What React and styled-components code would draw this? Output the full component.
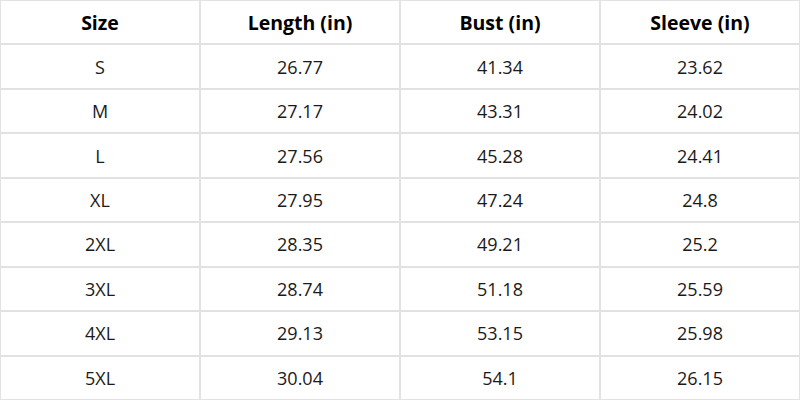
import React from "react";
import styled, { createGlobalStyle } from "styled-components";

const Global = createGlobalStyle`
  html, body { margin: 0; padding: 0; background: #fff; }
  #root { width: 800px; height: 400px; }
`;

const Table = styled.div`
  width: 800px;
  height: 400px;
  display: grid;
  grid-template-columns: repeat(4, 200px);
  grid-template-rows: repeat(9, 1fr);
  background: #fff;
  font-family: "Open Sans", "Noto Sans", sans-serif;
  color: #111;
`;

const Cell = styled.div`
  box-sizing: border-box;
  border: 1px solid #e2e2e2;
  display: flex;
  align-items: center;
  justify-content: center;
  font-size: ${(p) => (p.$head ? "19.5px" : "18px")};
  font-weight: ${(p) => (p.$head ? 700 : 400)};
  color: ${(p) => (p.$head ? "#000" : "#1a1a1a")};
`;

const head = ["Size", "Length (in)", "Bust (in)", "Sleeve (in)"];
const rows = [
  ["S", "26.77", "41.34", "23.62"],
  ["M", "27.17", "43.31", "24.02"],
  ["L", "27.56", "45.28", "24.41"],
  ["XL", "27.95", "47.24", "24.8"],
  ["2XL", "28.35", "49.21", "25.2"],
  ["3XL", "28.74", "51.18", "25.59"],
  ["4XL", "29.13", "53.15", "25.98"],
  ["5XL", "30.04", "54.1", "26.15"],
];

export default function App() {
  return (
    <>
      <Global />
      <Table>
        {head.map((h) => (
          <Cell key={h} $head>
            {h}
          </Cell>
        ))}
        {rows.map((r) =>
          r.map((v, i) => <Cell key={r[0] + i}>{v}</Cell>)
        )}
      </Table>
    </>
  );
}
